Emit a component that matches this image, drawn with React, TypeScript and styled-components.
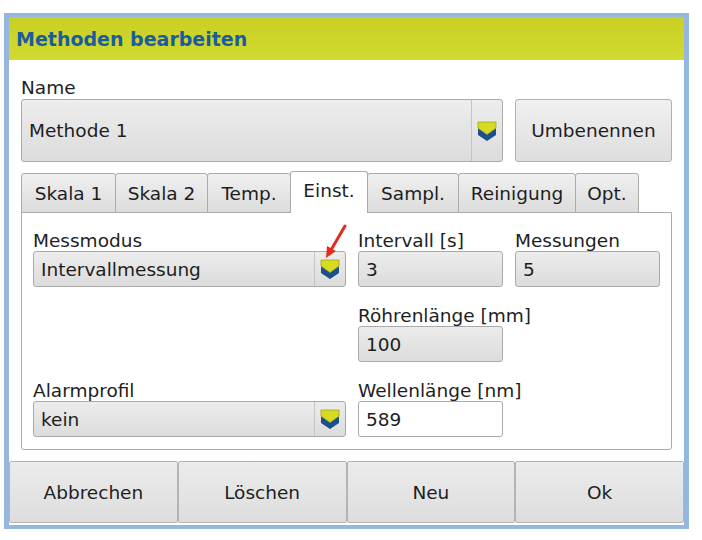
import React from "react";
import styled, { createGlobalStyle } from "styled-components";

const GlobalStyle = createGlobalStyle`
  html, body {
    margin: 0;
    padding: 0;
    background: #ffffff;
  }
  body {
    font-family: "DejaVu Sans", "Liberation Sans", sans-serif;
    color: #1e1e1e;
  }
`;

const Window = styled.div`
  margin: 13px 0 0 4px;
  width: 675px;
  border: 4px solid #95b6de;
  border-left-width: 5px;
  border-right-width: 5px;
  background: #ffffff;
  display: flex;
  flex-direction: column;
`;

const TitleBar = styled.div`
  height: 43px;
  display: flex;
  align-items: center;
  padding-left: 7px;
  background: linear-gradient(#c8d024, #d2d930);
  color: #1b5c9c;
  font-weight: bold;
  font-size: 19px;
`;

const Content = styled.div`
  padding: 17px 12px 0 12px;
  display: flex;
  flex-direction: column;
`;

const Label = styled.div<{ $tall?: boolean }>`
  font-size: 18.5px;
  line-height: ${(p) => (p.$tall ? "22px" : "21px")};
  height: ${(p) => (p.$tall ? "22px" : "21px")};
  white-space: nowrap;
`;

const NameRow = styled.div`
  display: flex;
  gap: 12px;
  height: 63px;
`;

const ComboBox = styled.div<{ $height: number }>`
  flex: 1;
  height: ${(p) => p.$height}px;
  box-sizing: border-box;
  display: flex;
  border: 1px solid #aaaaaa;
  border-radius: 3px;
  background: linear-gradient(#ededed, #dcdcdc);
`;

const ComboText = styled.div<{ $pad: number }>`
  flex: 1;
  display: flex;
  align-items: center;
  padding-left: ${(p) => p.$pad}px;
  font-size: 18.5px;
`;

const ComboButton = styled.div<{ $width: number }>`
  width: ${(p) => p.$width}px;
  border-left: 1px solid #c4c4c4;
  display: flex;
  align-items: center;
  justify-content: center;
`;

const PushButton = styled.div`
  width: 157px;
  box-sizing: border-box;
  border: 1px solid #b0b0b0;
  border-radius: 3px;
  background: linear-gradient(#f0f0f0, #dedede);
  display: flex;
  align-items: center;
  justify-content: center;
  font-size: 18.5px;
`;

const TabBar = styled.div`
  margin-top: 9px;
  height: 42px;
  display: flex;
  align-items: flex-end;
  margin-bottom: -1px;
  position: relative;
  z-index: 1;
`;

const Tab = styled.div<{ $active?: boolean; $width: number }>`
  box-sizing: border-box;
  width: ${(p) => p.$width}px;
  height: ${(p) => (p.$active ? "42px" : "40px")};
  padding-bottom: ${(p) => (p.$active ? "4px" : "0")};
  margin-left: -1px;
  display: flex;
  align-items: center;
  justify-content: center;
  font-size: 18.5px;
  white-space: nowrap;
  border: 1px solid #ababab;
  border-bottom: ${(p) => (p.$active ? "none" : "1px solid #ababab")};
  border-radius: 3px 3px 0 0;
  background: ${(p) => (p.$active ? "#ffffff" : "linear-gradient(#f0f0f0, #dcdcdc)")};

  &:first-child {
    margin-left: 0;
  }
`;

const Panel = styled.div`
  border: 1px solid #ababab;
  border-radius: 0 0 3px 3px;
  padding: 17px 11px 12px 11px;
  display: grid;
  grid-template-columns: 313px 145px 145px;
  grid-template-rows: 57px 57px 57px;
  column-gap: 12px;
  row-gap: 18px;
`;

const FieldGroup = styled.div<{ $col: number; $row: number }>`
  grid-column: ${(p) => p.$col};
  grid-row: ${(p) => p.$row};
  display: flex;
  flex-direction: column;
  position: relative;
`;

const Field = styled.div<{ $editable?: boolean }>`
  height: 36px;
  box-sizing: border-box;
  border: 1px solid #aaaaaa;
  border-radius: 3px;
  background: ${(p) => (p.$editable ? "#ffffff" : "linear-gradient(#ececec, #dcdcdc)")};
  display: flex;
  align-items: center;
  padding-left: 7px;
  font-size: 18.5px;
`;

const ButtonBar = styled.div`
  margin-top: 11px;
  display: grid;
  grid-template-columns: repeat(4, 1fr);
  padding-bottom: 2px;
`;

const BarButton = styled.div`
  height: 62px;
  box-sizing: border-box;
  border: 1px solid #b4b4b4;
  border-radius: 2px;
  background: linear-gradient(#ececec, #dddddd);
  display: flex;
  align-items: center;
  justify-content: center;
  font-size: 18.5px;
`;

const Arrow = styled.svg`
  position: absolute;
  left: 290px;
  top: -6px;
  pointer-events: none;
`;

const DropIcon = () => (
  <svg width="20" height="22" viewBox="0 0 20 22">
    <polygon points="1,8 10,14 19,8 19,15 10,21 1,15" fill="#1c4f90" />
    <polygon points="1,2 19,2 19,8 10,14.5 1,8" fill="#d6da20" stroke="#a2a51a" strokeWidth="0.8" />
  </svg>
);

const Combo: React.FC<{ text: string; height: number; pad: number; btn: number }> = ({
  text,
  height,
  pad,
  btn,
}) => (
  <ComboBox $height={height}>
    <ComboText $pad={pad}>{text}</ComboText>
    <ComboButton $width={btn}>
      <DropIcon />
    </ComboButton>
  </ComboBox>
);

const tabs = [
  { label: "Skala 1", width: 95 },
  { label: "Skala 2", width: 93 },
  { label: "Temp.", width: 84 },
  { label: "Einst.", width: 78 },
  { label: "Sampl.", width: 92 },
  { label: "Reinigung", width: 118 },
  { label: "Opt.", width: 64 },
];

export default function App() {
  return (
    <>
      <GlobalStyle />
      <Window>
        <TitleBar>Methoden bearbeiten</TitleBar>
        <Content>
          <Label $tall>Name</Label>
          <NameRow>
            <Combo text="Methode 1" height={63} pad={7} btn={30} />
            <PushButton>Umbenennen</PushButton>
          </NameRow>

          <TabBar>
            {tabs.map((t) => (
              <Tab key={t.label} $width={t.width} $active={t.label === "Einst."}>
                {t.label}
              </Tab>
            ))}
          </TabBar>

          <Panel>
            <FieldGroup $col={1} $row={1}>
              <Label>Messmodus</Label>
              <Combo text="Intervallmessung" height={36} pad={7} btn={30} />
              <Arrow width="26" height="36" viewBox="0 0 26 36">
                <line x1="22" y1="2" x2="8" y2="26" stroke="#e52a1e" strokeWidth="3" strokeLinecap="round" />
                <polygon points="3,34 4,22 13,27" fill="#e52a1e" />
              </Arrow>
            </FieldGroup>
            <FieldGroup $col={2} $row={1}>
              <Label>Intervall [s]</Label>
              <Field>3</Field>
            </FieldGroup>
            <FieldGroup $col={3} $row={1}>
              <Label>Messungen</Label>
              <Field>5</Field>
            </FieldGroup>
            <FieldGroup $col={2} $row={2}>
              <Label>Röhrenlänge [mm]</Label>
              <Field>100</Field>
            </FieldGroup>
            <FieldGroup $col={1} $row={3}>
              <Label>Alarmprofil</Label>
              <Combo text="kein" height={36} pad={7} btn={30} />
            </FieldGroup>
            <FieldGroup $col={2} $row={3}>
              <Label>Wellenlänge [nm]</Label>
              <Field $editable>589</Field>
            </FieldGroup>
          </Panel>
        </Content>

        <ButtonBar>
          <BarButton>Abbrechen</BarButton>
          <BarButton>Löschen</BarButton>
          <BarButton>Neu</BarButton>
          <BarButton>Ok</BarButton>
        </ButtonBar>
      </Window>
    </>
  );
}
